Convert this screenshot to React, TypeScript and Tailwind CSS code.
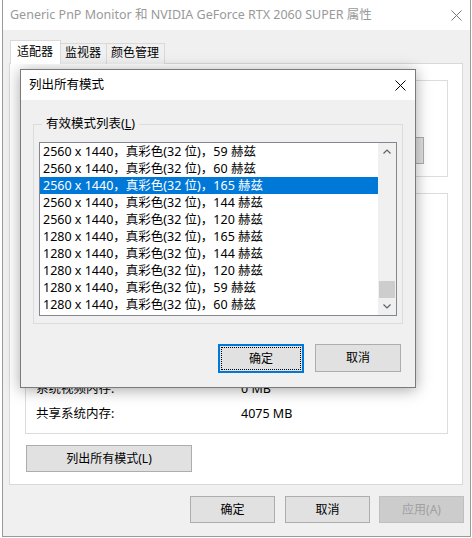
import React from "react";

const rows = [
  "2560 x 1440，真彩色(32 位)，59 赫兹",
  "2560 x 1440，真彩色(32 位)，60 赫兹",
  "2560 x 1440，真彩色(32 位)，165 赫兹",
  "2560 x 1440，真彩色(32 位)，144 赫兹",
  "2560 x 1440，真彩色(32 位)，120 赫兹",
  "1280 x 1440，真彩色(32 位)，165 赫兹",
  "1280 x 1440，真彩色(32 位)，144 赫兹",
  "1280 x 1440，真彩色(32 位)，120 赫兹",
  "1280 x 1440，真彩色(32 位)，59 赫兹",
  "1280 x 1440，真彩色(32 位)，60 赫兹",
];

const CloseX = ({ color = "#000" }: { color?: string }) => (
  <svg width="11" height="11" viewBox="0 0 11 11">
    <path d="M0.5 0.5L10.5 10.5M10.5 0.5L0.5 10.5" stroke={color} strokeWidth="1" fill="none" />
  </svg>
);

const Chevron = ({ up }: { up?: boolean }) => (
  <svg width="8" height="5" viewBox="0 0 8 5">
    <path
      d={up ? "M0.5 4.5L4 1L7.5 4.5" : "M0.5 0.5L4 4L7.5 0.5"}
      stroke="#606060"
      strokeWidth="1.2"
      fill="none"
    />
  </svg>
);

const Btn = ({
  children,
  className = "",
  disabled,
}: {
  children: React.ReactNode;
  className?: string;
  disabled?: boolean;
}) => (
  <div
    className={`h-[27px] flex items-center justify-center border text-[12px] ${
      disabled ? "border-[#bfbfbf] text-[#a0a0a0] bg-[#cccccc]" : "border-[#adadad] text-black bg-[#e1e1e1]"
    } ${className}`}
  >
    {children}
  </div>
);

export default function App() {
  return (
    <div className="relative w-[472px] h-[538px] overflow-hidden bg-white font-['Noto_Sans','Noto_Sans_CJK_SC',sans-serif] text-[12px] leading-[16px]">
      {/* parent window */}
      <div className="ml-[2px] w-[469px] h-[537px] flex flex-col border-l border-r border-b border-[#9a9a9a]">
        <div className="h-[30px] shrink-0 bg-white flex items-center pl-[7px] pr-[8px] text-[#999999] text-[12.5px]">
          <span className="flex-1">Generic PnP Monitor 和 NVIDIA GeForce RTX 2060 SUPER 属性</span>
          <CloseX color="#777" />
        </div>
        <div className="flex-1 bg-[#f0f0f0] px-[6px] pt-[10px]">
          {/* tabs */}
          <div className="flex items-end h-[24px] ml-[1px]">
            <div className="relative z-10 h-[24px] w-[51px] bg-white border border-b-0 border-[#d9d9d9] pl-[6px] pt-[3px]">
              适配器
            </div>
            <div className="h-[21px] w-[46px] bg-[#f0f0f0] border-t border-r border-[#d9d9d9] pl-[4px] pt-[1px]">
              监视器
            </div>
            <div className="h-[21px] w-[58px] bg-[#f0f0f0] border-t border-r border-[#d9d9d9] pl-[4px] pt-[1px]">
              颜色管理
            </div>
          </div>
          {/* panel */}
          <div className="-mt-[1px] w-[454px] h-[422px] bg-white border border-[#d9d9d9] pl-[15px] pr-[14px] pt-[16px]">
            <div className="h-[97px] border border-[#dcdcdc] flex justify-end items-start pr-[23px] pt-[56px]">
              <Btn className="w-[75px]">属性(P)</Btn>
            </div>
            <div className="mt-[16px] h-[241px] border border-[#dcdcdc] flex flex-col justify-end pl-[10px] pb-[11px] gap-[9px] text-[12.5px]">
              <div className="flex">
                <span className="w-[205px]">系统视频内存:</span>
                <span>0 MB</span>
              </div>
              <div className="flex">
                <span className="w-[205px]">共享系统内存:</span>
                <span>4075 MB</span>
              </div>
            </div>
            <Btn className="mt-[11px] ml-[1px] w-[166px]">列出所有模式(L)</Btn>
          </div>
          {/* footer */}
          <div className="mt-[11px] flex justify-end">
            <Btn className="w-[85px]">确定</Btn>
            <Btn className="ml-[10px] w-[85px]">取消</Btn>
            <Btn className="ml-[9px] w-[85px]" disabled>
              应用(A)
            </Btn>
          </div>
        </div>
      </div>

      {/* modal dialog */}
      <div className="absolute left-[20px] top-[69px] w-[396px] h-[319px] flex flex-col border border-[#7a7a7a] bg-[#f0f0f0] shadow-[0_2px_14px_rgba(0,0,0,0.35)]">
        <div className="h-[30px] shrink-0 bg-white flex items-center pl-[8px] pr-[9px]">
          <span className="flex-1 text-[12.5px]">列出所有模式</span>
          <CloseX />
        </div>
        <div className="flex-1 px-[12px] pt-[16px]">
          <fieldset className="border border-[#dcdcdc] px-[5px] pb-[7px]">
            <legend className="ml-[3px] px-[4px] leading-[16px] text-[12.5px]">
              有效模式列表(<span className="underline">L</span>)
            </legend>
            <div className="mt-[10px] h-[174px] bg-white border border-[#828790] flex">
              <div className="flex-1 flex flex-col text-[12.5px]">
                {rows.map((r, i) => (
                  <div
                    key={i}
                    className={`h-[17px] leading-[17px] pl-[3px] whitespace-nowrap ${
                      i === 2 ? "bg-[#0078d7] text-white" : "text-black"
                    }`}
                  >
                    {r}
                  </div>
                ))}
              </div>
              <div className="w-[18px] bg-[#f0f0f0] flex flex-col items-center">
                <div className="h-[17px] flex items-center justify-center">
                  <Chevron up />
                </div>
                <div className="flex-1 w-full flex flex-col justify-end px-[1px]">
                  <div className="h-[17px] bg-[#cdcdcd]" />
                </div>
                <div className="h-[17px] flex items-center justify-center">
                  <Chevron />
                </div>
              </div>
            </div>
          </fieldset>
          <div className="mt-[20px] flex justify-end pr-[2px]">
            <div className="w-[86px] h-[29px] border-2 border-[#0078d7] bg-[#e1e1e1] p-[1px]">
              <div className="w-full h-full border border-dotted border-black flex items-center justify-center">
                确定
              </div>
            </div>
            <Btn className="ml-[11px] w-[86px] h-[28px]">取消</Btn>
          </div>
        </div>
      </div>
    </div>
  );
}
